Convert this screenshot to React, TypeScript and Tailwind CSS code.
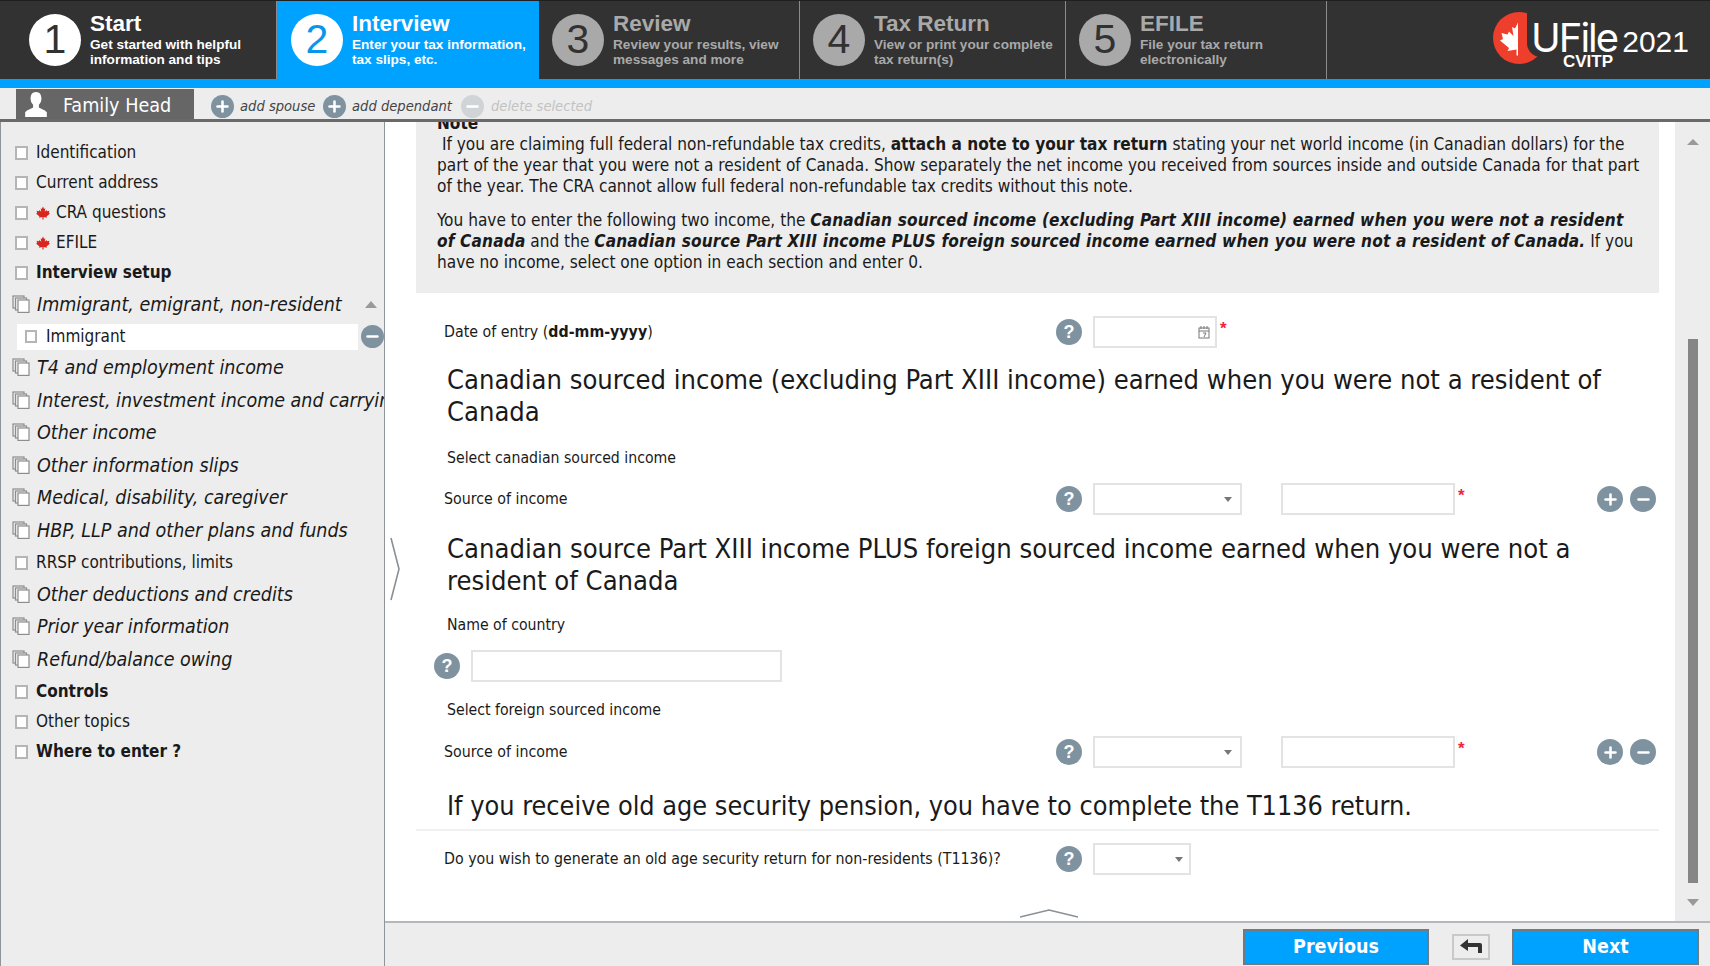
import React from 'react';
import { Plus, Minus } from 'lucide-react';

const uiFont = "font-['DejaVu_Sans_Condensed','Noto_Sans',sans-serif]";

const steps = [
  { number: 1, title: 'Start', lines: ['Get started with helpful', 'information and tips'], width: 'w-[277px] pl-[29px]', state: 'done' },
  { number: 2, title: 'Interview', lines: ['Enter your tax information,', 'tax slips, etc.'], width: 'w-[262px] pl-[14px]', state: 'active' },
  { number: 3, title: 'Review', lines: ['Review your results, view', 'messages and more'], width: 'w-[261px] pl-[13px]', state: 'off' },
  { number: 4, title: 'Tax Return', lines: ['View or print your complete', 'tax return(s)'], width: 'w-[266px] pl-[13px]', state: 'off' },
  { number: 5, title: 'EFILE', lines: ['File your tax return', 'electronically'], width: 'w-[261px] pl-[13px]', state: 'off' },
];

type NavItem = { label: string; kind: 'plain' | 'bold' | 'leaf' | 'group' | 'child'; height: string };

const navItems: NavItem[] = [
  { label: 'Identification', kind: 'plain', height: 'h-[30px]' },
  { label: 'Current address', kind: 'plain', height: 'h-[30px]' },
  { label: 'CRA questions', kind: 'leaf', height: 'h-[30px]' },
  { label: 'EFILE', kind: 'leaf', height: 'h-[30px]' },
  { label: 'Interview setup', kind: 'bold', height: 'h-[30px]' },
  { label: 'Immigrant, emigrant, non-resident', kind: 'group', height: 'h-[33px]' },
  { label: 'Immigrant', kind: 'child', height: 'h-[31px]' },
  { label: 'T4 and employment income', kind: 'group', height: 'h-[32px]' },
  { label: 'Interest, investment income and carrying charges', kind: 'group', height: 'h-[33px]' },
  { label: 'Other income', kind: 'group', height: 'h-[32px]' },
  { label: 'Other information slips', kind: 'group', height: 'h-[33px]' },
  { label: 'Medical, disability, caregiver', kind: 'group', height: 'h-[32px]' },
  { label: 'HBP, LLP and other plans and funds', kind: 'group', height: 'h-[34px]' },
  { label: 'RRSP contributions, limits', kind: 'plain', height: 'h-[30px]' },
  { label: 'Other deductions and credits', kind: 'group', height: 'h-[33px]' },
  { label: 'Prior year information', kind: 'group', height: 'h-[32px]' },
  { label: 'Refund/balance owing', kind: 'group', height: 'h-[34px]' },
  { label: 'Controls', kind: 'bold', height: 'h-[30px]' },
  { label: 'Other topics', kind: 'plain', height: 'h-[30px]' },
  { label: 'Where to enter ?', kind: 'bold', height: 'h-[30px]' },
];

const MapleLeaf = ({ className }: { className: string }) => (
  <svg viewBox="0 0 24 24" className={className} fill="currentColor">
    <path d="M12 1l-2 4-2-1 1 6-3-3-1 2-4-1 1 4-2 1 6 5-1 2 6-1v4h2v-4l6 1-1-2 6-5-2-1 1-4-4 1-1-2-3 3 1-6-2 1z" />
  </svg>
);

const CircleBtn = ({ type, size = 'w-[23px] h-[23px]', faded = false }: { type: 'plus' | 'minus'; size?: string; faded?: boolean }) => (
  <span className={`${size} rounded-full flex items-center justify-center shrink-0 ${faded ? 'bg-[#d0d4d7]' : 'bg-[#7f929f]'}`}>
    {type === 'plus' ? (
      <Plus className="w-[17px] h-[17px] text-white" strokeWidth={3.6} />
    ) : (
      <Minus className="w-[17px] h-[17px] text-white" strokeWidth={3.6} />
    )}
  </span>
);

const Help = () => (
  <span className="w-[26px] h-[26px] rounded-full bg-[#7f929f] text-white flex items-center justify-center text-[18px] font-bold font-['Liberation_Sans',sans-serif] shrink-0">
    ?
  </span>
);

const Check = ({ small = false }: { small?: boolean }) => (
  <span className={`${small ? 'w-[12px] h-[13px]' : 'w-[13px] h-[14px]'} border-2 border-[#b5b5b5] bg-white shrink-0 block`} />
);

const CopyIcon = () => (
  <svg viewBox="0 0 18 18" className="w-[18px] h-[18px] shrink-0 -ml-[1px] -mt-[2px]" fill="none" stroke="#8d8d8d" strokeWidth="1.2">
    <rect x="1" y="1" width="11" height="12" fill="#ededed" />
    <rect x="3.5" y="3" width="11" height="12" fill="#ededed" />
    <rect x="6" y="5" width="11" height="12.4" fill="#fff" />
  </svg>
);

const Caret = () => (
  <span className="w-0 h-0 border-x-[4px] border-x-transparent border-t-[5px] border-t-[#777]" />
);

const Required = ({ offset }: { offset: string }) => (
  <span className={`text-[#f0243c] text-[17px] font-bold leading-none font-['Liberation_Sans',sans-serif] ${offset}`}>*</span>
);

const SourceRow = () => (
  <div className="flex items-center h-[32px] pl-[28px] pr-[3px]">
    <span className="w-[612px] text-[15.8px]">Source of income</span>
    <Help />
    <div className="ml-[11px] w-[149px] h-[32px] border-2 border-[#e3e3e3] flex items-center justify-end pr-[8px]">
      <Caret />
    </div>
    <div className="ml-[39px] w-[174px] h-[32px] border-2 border-[#e3e3e3]" />
    <Required offset="self-start ml-[3px] mt-[4px]" />
    <div className="ml-auto flex gap-[7px]">
      <CircleBtn type="plus" size="w-[26px] h-[26px]" />
      <CircleBtn type="minus" size="w-[26px] h-[26px]" />
    </div>
  </div>
);

export default function App() {
  return (
    <div className={`relative w-[1710px] h-[966px] flex flex-col overflow-hidden bg-white text-[#1a1a1a] ${uiFont}`}>
      {/* Steps */}
      <div className="h-[79px] bg-[#323232] flex shrink-0 border-t border-[#1f1f1f] font-['Liberation_Sans',sans-serif]">
        {steps.map((step) => {
          const lit = step.state !== 'off';
          return (
            <div
              key={step.number}
              className={`${step.width} h-full flex items-center gap-[9px] ${
                step.state === 'active' ? 'bg-[#00a2ff]' : 'border-r border-[#8a8a8a]'
              }`}
            >
              <span
                className={`w-[52px] h-[52px] rounded-full flex items-center justify-center text-[41px] shrink-0 ${
                  lit ? 'bg-white' : 'bg-[#a9a9a9]'
                } ${step.state === 'active' ? 'text-[#0b95ea]' : 'text-[#323232]'}`}
              >
                {step.number}
              </span>
              <div className={`font-bold -mt-[2px] ${lit ? 'text-white' : 'text-[#a9a9a9]'}`}>
                <div className="text-[22.5px] leading-[24px] mb-[1px]">{step.title}</div>
                {step.lines.map((line) => (
                  <div key={line} className="text-[13.6px] leading-[15px] whitespace-nowrap">{line}</div>
                ))}
              </div>
            </div>
          );
        })}
        {/* Logo */}
        <div className="flex-1 flex items-center justify-end pr-[21px]">
          <div className="relative w-[196px] h-[56px]">
            <span className="absolute left-0 top-[0px] w-[52px] h-[52px] rounded-full bg-[#ee3e2c] overflow-hidden">
              <span className="block ml-[6px] mt-[9px] w-[19px] h-[36px] overflow-hidden">
                <MapleLeaf className="w-[38px] h-[36px] text-white" />
              </span>
            </span>
            <span className="absolute left-[34px] top-[0px] w-[20px] h-[45px] bg-[#323232] rounded-bl-[14px]" />
            <span className="absolute left-[38px] top-[2px] text-[40px] leading-[48px] text-white font-['Inter',sans-serif] tracking-[-2px]">UFile</span>
            <span className="absolute right-0 top-[12px] text-[30px] leading-[36px] text-white">2021</span>
            <span className="absolute left-[70px] top-[41px] text-[17px] leading-[18px] font-bold text-white">CVITP</span>
          </div>
        </div>
      </div>
      <div className="h-[9px] bg-[#00a2ff] shrink-0" />

      {/* Toolbar */}
      <div className="h-[34px] bg-[#ededed] border-b-[3px] border-[#6a6a6a] flex items-end pl-[16px] shrink-0">
        <div className="w-[178px] h-[30px] bg-[#666] flex items-center pl-[7px] pt-[3px] text-white text-[19.6px]">
          <svg viewBox="0 0 24 24" className="w-[26px] h-[26px] mr-[14px] -mt-[3px]" fill="#fff">
            <path d="M12 1c3.4 0 5 2.6 5 6 0 2.500-1 4.500-2.300 5.800v2.200c0 1 5 2 7.300 4.500V24H2v-4.500C4.300 17 9.300 16 9.300 15v-2.200C8 11.500 7 9.500 7 7c0-3.400 1.600-6 5-6z" />
          </svg>
          Family Head
        </div>
        <div className="h-[31px] flex items-center pl-[17px] pt-[5px] text-[14.6px] italic text-[#444]">
          <CircleBtn type="plus" />
          <span className="ml-[6px] w-[83px] whitespace-nowrap">add spouse</span>
          <CircleBtn type="plus" />
          <span className="ml-[6px] w-[109px] whitespace-nowrap">add dependant</span>
          <CircleBtn type="minus" faded />
          <span className="ml-[7px] text-[#c2c2c2] whitespace-nowrap">delete selected</span>
        </div>
      </div>

      <div className="flex-1 flex min-h-0">
        {/* Sidebar */}
        <aside className="w-[385px] bg-[#ededed] border-l border-r border-[#8f9499] pt-[16px] shrink-0 overflow-hidden">
          {navItems.map((item) => {
            if (item.kind === 'child') {
              return (
                <div key={item.label} className={`${item.height} flex items-center pl-[16px] relative`}>
                  <div className="w-[341px] h-[26px] bg-white flex items-center pl-[8px] gap-[9px] text-[17px]">
                    <Check small />
                    {item.label}
                  </div>
                  <span className="ml-[3px]"><CircleBtn type="minus" /></span>
                </div>
              );
            }
            if (item.kind === 'group') {
              return (
                <div key={item.label} className={`${item.height} flex items-center pl-[12px] gap-[7px] text-[19.5px] italic whitespace-nowrap overflow-hidden`}>
                  <CopyIcon />
                  <span>{item.label}</span>
                  {item.label.startsWith('Immigrant') && (
                    <span className="ml-auto mr-[7px] w-0 h-0 border-x-[6px] border-x-transparent border-b-[7px] border-b-[#999]" />
                  )}
                </div>
              );
            }
            return (
              <div key={item.label} className={`${item.height} flex items-center pl-[14px] gap-[8px] text-[17px] ${item.kind === 'bold' ? 'font-bold' : ''}`}>
                <Check />
                {item.kind === 'leaf' && <MapleLeaf className="w-[14px] h-[14px] text-[#d9261c] -mr-[2px]" />}
                {item.label}
              </div>
            );
          })}
        </aside>

        {/* Main */}
        <div className="flex-1 flex flex-col min-w-0">
          <div className="flex-1 flex min-h-0">
            <div className="flex-1 overflow-hidden min-w-0 pl-[31px] pr-[16px]">
              <section className="-mt-[9px] bg-[#ededed] pl-[21px] pr-[14px] pb-[20px] text-[17.1px] leading-[21px] h-[180px]">
                <div className="font-bold">Note</div>
                <p>
                  {'\u00a0'}If you are claiming full federal non-refundable tax credits, <b>attach a note to your tax return</b> stating your net world income (in Canadian dollars) for the part of the year that you were not a resident of Canada. Show separately the net income you received from sources inside and outside Canada for that part of the year. The CRA cannot allow full federal non-refundable tax credits without this note.
                </p>
                <p className="mt-[13px]">
                  You have to enter the following two income, the <b className="tracking-[0.16px]"><i>Canadian sourced income (excluding Part XIII income) earned when you were not a resident of Canada</i></b> and the <b className="tracking-[0.16px]"><i>Canadian source Part XIII income PLUS foreign sourced income earned when you were not a resident of Canada.</i></b> If you have no income, select one option in each section and enter 0.
                </p>
              </section>

              <div className="flex items-center h-[32px] mt-[23px] pl-[28px]">
                <span className="w-[612px] text-[15.8px] whitespace-nowrap">Date of entry (<b>dd-mm-yyyy</b>)</span>
                <Help />
                <div className="ml-[11px] w-[124px] h-[32px] border-2 border-[#e3e3e3] flex items-center justify-end pr-[5px]">
                  <svg viewBox="0 0 12 14" className="w-[12px] h-[14px]" fill="none" stroke="#777">
                    <rect x="1" y="3" width="10" height="10" />
                    <path d="M3 1v3M6 1v3M9 1v3M1 6h10M5 8h3l-2 4" />
                  </svg>
                </div>
                <Required offset="self-start ml-[3px] mt-[4px]" />
              </div>

              <h2 className="mt-[16px] pl-[31px] pr-[30px] text-[27.1px] leading-[32px] font-normal">
                Canadian sourced income (excluding Part XIII income) earned when you were not a resident of Canada
              </h2>
              <div className="mt-[20px] pl-[31px] text-[15.7px] leading-[20px]">Select canadian sourced income</div>
              <div className="mt-[15px]"><SourceRow /></div>

              <h2 className="mt-[18px] pl-[31px] pr-[30px] text-[27.15px] leading-[32px] font-normal">
                Canadian source Part XIII income PLUS foreign sourced income earned when you were not a resident of Canada
              </h2>
              <div className="mt-[18px] pl-[31px] text-[15.7px] leading-[20px]">Name of country</div>
              <div className="mt-[15px] pl-[18px] flex items-center gap-[11px]">
                <Help />
                <div className="w-[311px] h-[32px] border-2 border-[#e3e3e3]" />
              </div>
              <div className="mt-[18px] pl-[31px] text-[15.7px] leading-[20px]">Select foreign sourced income</div>
              <div className="mt-[16px]"><SourceRow /></div>

              <h2 className="mt-[22px] pl-[31px] text-[26.8px] leading-[32px] font-normal border-b-2 border-[#f0f0f0] pb-[7px]">
                If you receive old age security pension, you have to complete the T1136 return.
              </h2>
              <div className="flex items-center h-[32px] mt-[12px] pl-[28px]">
                <span className="w-[612px] text-[15.8px] whitespace-nowrap">Do you wish to generate an old age security return for non-residents (T1136)?</span>
                <Help />
                <div className="ml-[11px] w-[98px] h-[32px] border-2 border-[#e3e3e3] flex items-center justify-end pr-[6px]">
                  <Caret />
                </div>
              </div>
            </div>

            {/* Scrollbar */}
            <div className="w-[35px] shrink-0 bg-[#ededed] flex flex-col items-center pt-[17px] pb-[8px]">
              <span className="w-0 h-0 border-x-[6px] border-x-transparent border-b-[6px] border-b-[#999]" />
              <div className="w-[10px] h-[544px] bg-[#868686] mt-[194px] shrink-0" />
              <span className="w-0 h-0 mt-[16px] border-x-[6px] border-x-transparent border-t-[7px] border-t-[#999]" />
            </div>
          </div>

          {/* Footer */}
          <div className="h-[45px] shrink-0 bg-[#ededed] border-t-2 border-[#b4b8bc] flex items-end justify-end pr-[11px] pb-[1px]">
            <button className="w-[186px] h-[36px] bg-[#00a2ff] border-2 border-[#6f7a82] text-white font-bold text-[19.5px]">Previous</button>
            <button className="ml-[23px] mb-[5px] w-[38px] h-[26px] border-2 border-[#c9c9c9] flex items-center justify-center">
              <svg viewBox="0 0 24 16" className="w-[24px] h-[16px]" fill="#333">
                <path d="M1 6.500L9 0v4h12q2 0 2 2v8h-4V8H9v4z" />
              </svg>
            </button>
            <button className="ml-[22px] w-[187px] h-[36px] bg-[#00a2ff] border-2 border-[#6f7a82] text-white font-bold text-[19.5px]">Next</button>
          </div>
        </div>
      </div>

      {/* Sidebar toggle and expander drawn over the panel edges */}
      <svg viewBox="0 0 12 64" className="absolute left-[389px] top-[537px] w-[12px] h-[64px]" fill="none" stroke="#8a8f94" strokeWidth="1.6">
        <path d="M2 1l8 31-8 31" />
      </svg>
      <svg viewBox="0 0 58 10" className="absolute left-[1020px] top-[909px] w-[58px] h-[10px]" fill="none" stroke="#8a8f94" strokeWidth="1.6">
        <path d="M0 8L29 1l29 7" />
      </svg>
    </div>
  );
}
